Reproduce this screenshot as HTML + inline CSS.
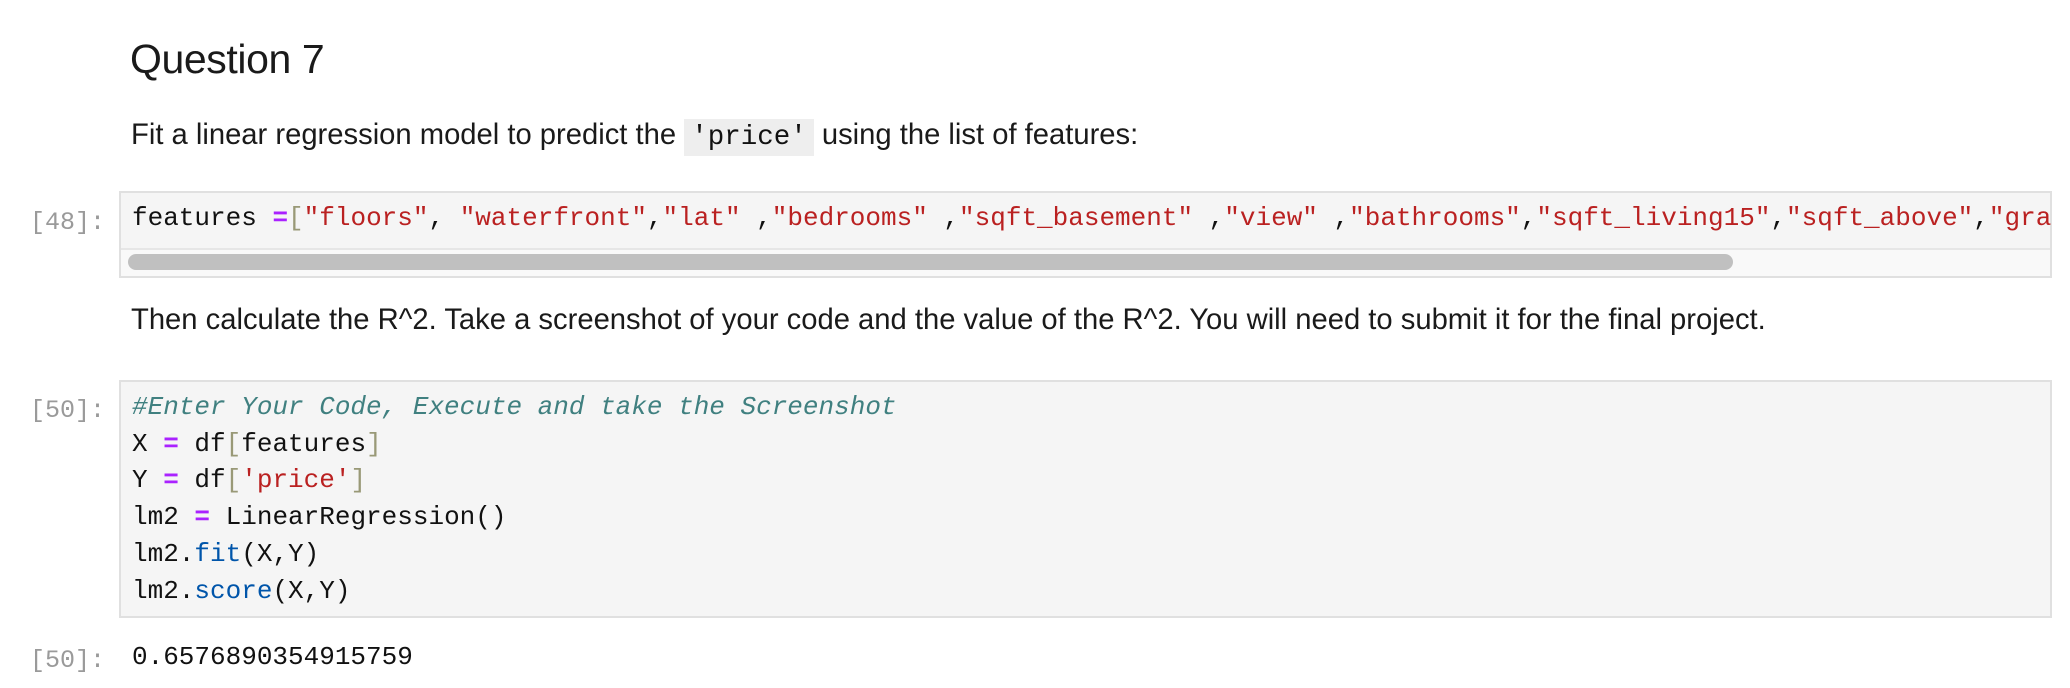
<!DOCTYPE html>
<html><head><meta charset="utf-8"><style>
html,body{margin:0;padding:0;background:#fff;width:2070px;height:688px;overflow:hidden;position:relative}
.s{font-family:"Liberation Sans",sans-serif;color:#1a1a1a;position:absolute;white-space:pre}
.m{font-family:"Liberation Mono",monospace;font-size:26px;line-height:36.7px;position:absolute;white-space:pre;color:#111}
.p{font-family:"Liberation Mono",monospace;font-size:25px;color:#9a9a9a;position:absolute;line-height:36px}
.box{position:absolute;background:#f5f5f5;border:2px solid #e0e0e0;box-sizing:border-box}
.st{color:#ba2121}.op{color:#aa22ff;font-weight:bold}.br{color:#999977}.cm{color:#408080;font-style:italic}.pr{color:#0055aa}
</style></head><body>
<div class="s" style="left:130px;top:34px;font-size:41px;line-height:50px;letter-spacing:-0.4px">Question 7</div>
<div class="s" style="left:131px;top:118px;font-size:29.2px;line-height:34px">Fit a linear regression model to predict the <span style="background:#eeeeee;font-family:'Liberation Mono',monospace;font-size:27.5px;padding:3px 7px;color:#111">'price'</span> using the list of features:</div>

<div class="box" style="left:119px;top:191px;width:1933px;height:87px;overflow:hidden">
<div style="position:absolute;left:0;right:0;top:55px;height:29px;background:#f9f9f9;border-top:2px solid #e6e6e6"></div>
<div style="position:absolute;left:7px;top:61px;width:1605px;height:16px;background:#c0c0c0;border-radius:8px"></div>
</div>
<div class="p" style="left:30px;top:205px">[48]:</div>
<div class="m" style="left:132px;top:200px">features <span class="op">=</span><span class="br">[</span><span class="st">"floors"</span>, <span class="st">"waterfront"</span>,<span class="st">"lat"</span> ,<span class="st">"bedrooms"</span> ,<span class="st">"sqft_basement"</span> ,<span class="st">"view"</span> ,<span class="st">"bathrooms"</span>,<span class="st">"sqft_living15"</span>,<span class="st">"sqft_above"</span>,<span class="st">"gra</span></div>

<div class="s" style="left:131px;top:303px;font-size:29.2px;line-height:34px">Then calculate the R^2. Take a screenshot of your code and the value of the R^2. You will need to submit it for the final project.</div>

<div class="box" style="left:119px;top:380px;width:1933px;height:238px"></div>
<div class="p" style="left:30px;top:393px">[50]:</div>
<div class="m" style="left:132px;top:389px"><span class="cm">#Enter Your Code, Execute and take the Screenshot</span>
X <span class="op">=</span> df<span class="br">[</span>features<span class="br">]</span>
Y <span class="op">=</span> df<span class="br">[</span><span class="st">'price'</span><span class="br">]</span>
lm2 <span class="op">=</span> LinearRegression()
lm2.<span class="pr">fit</span>(X,Y)
lm2.<span class="pr">score</span>(X,Y)</div>

<div class="p" style="left:30px;top:643px">[50]:</div>
<div class="m" style="left:132px;top:639px">0.6576890354915759</div>
</body></html>
